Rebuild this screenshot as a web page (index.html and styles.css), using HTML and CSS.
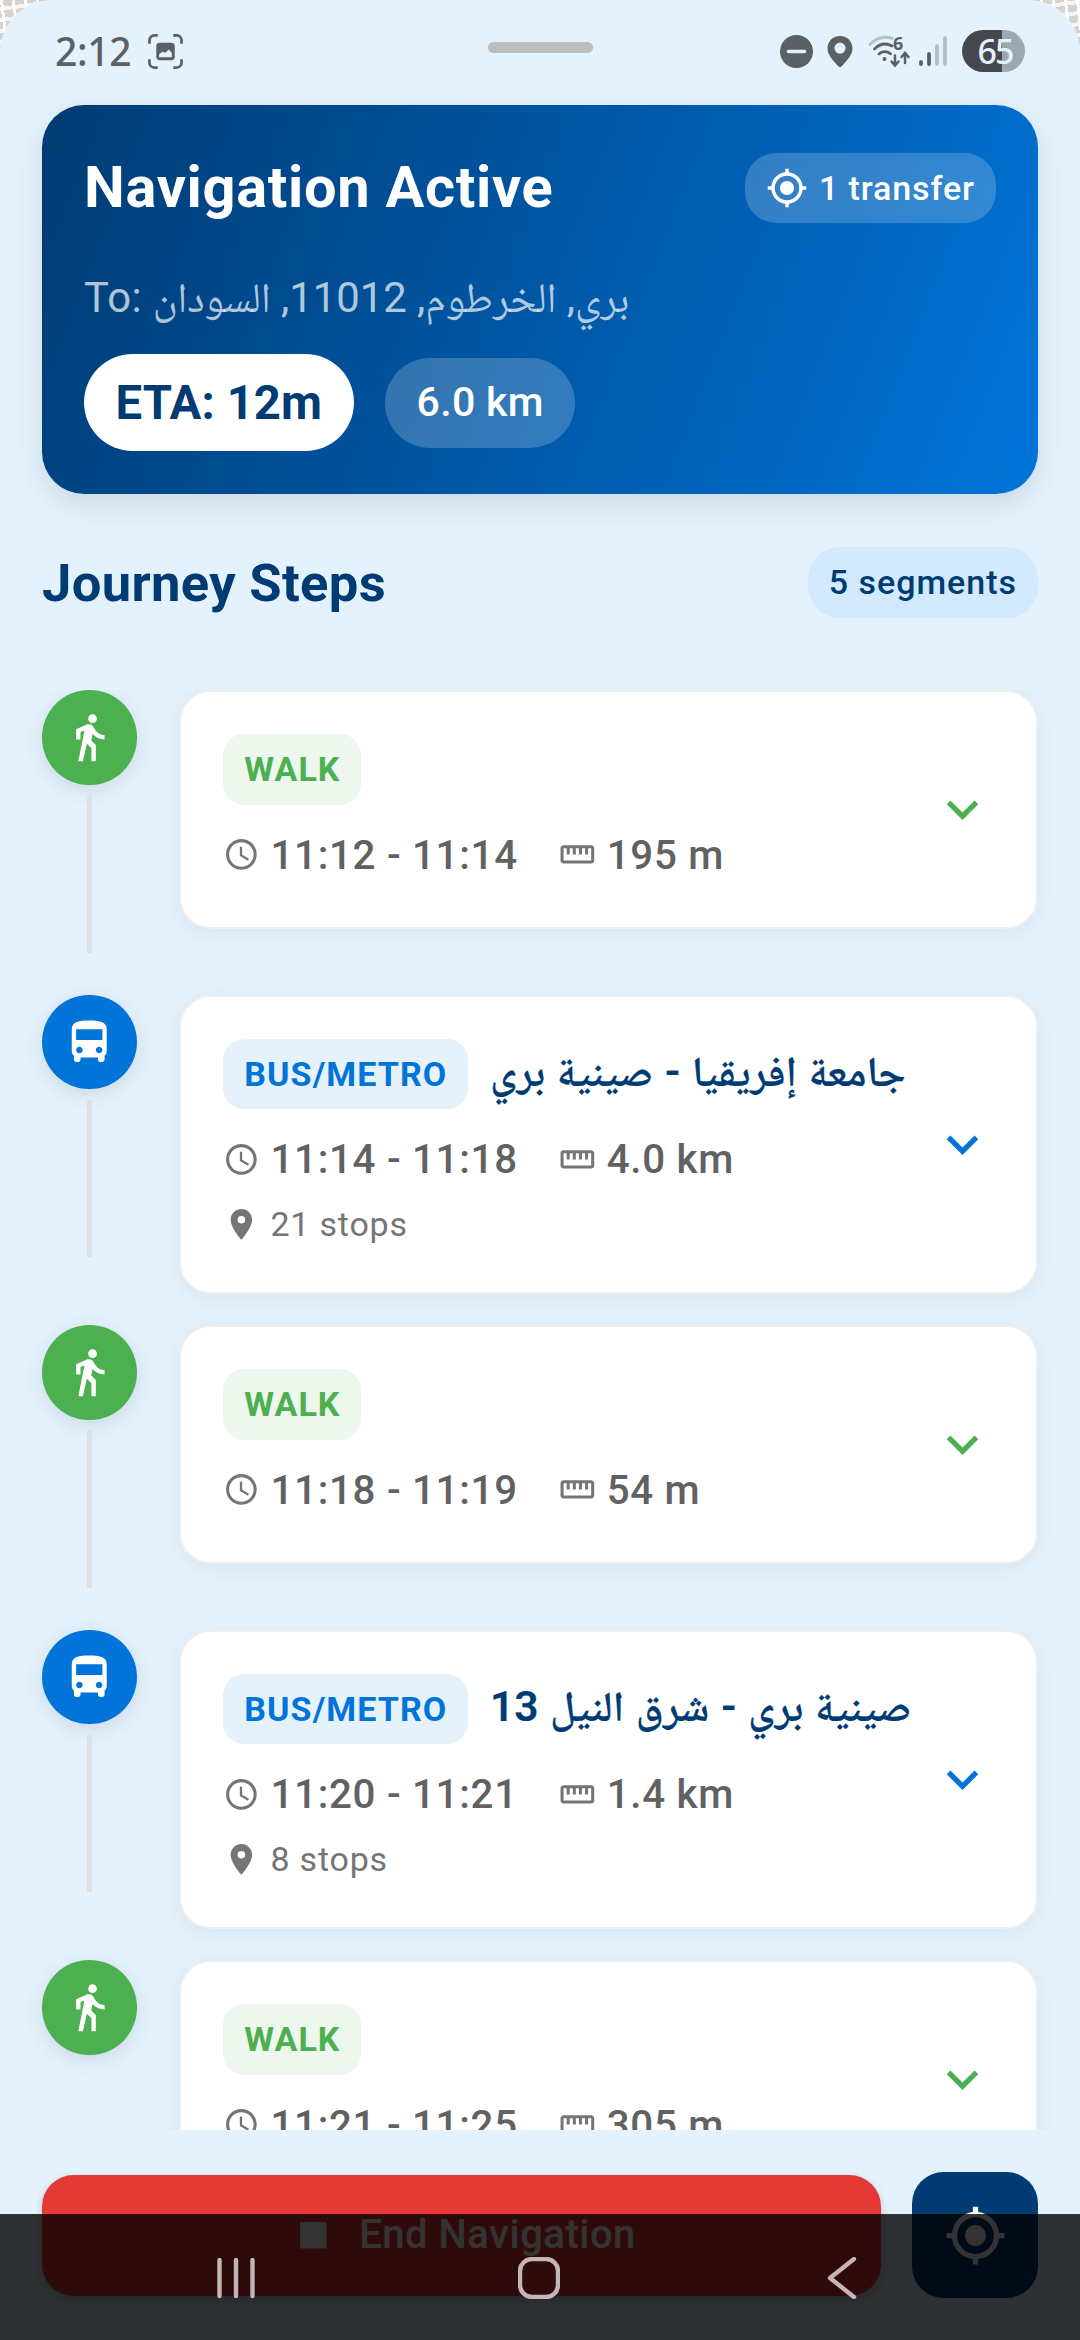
FILE: index.html
```html
<!DOCTYPE html>
<html lang="en">
<head>
<meta charset="utf-8">
<title>Navigation</title>
<link rel="stylesheet" href="styles.css">
</head>
<body>
<svg class="defs" aria-hidden="true">
  <symbol id="locate" viewBox="0 0 24 24"><path d="M12 8c-2.21 0-4 1.79-4 4s1.79 4 4 4 4-1.79 4-4-1.79-4-4-4zm8.94 3A8.994 8.994 0 0 0 13 3.06V1h-2v2.06A8.994 8.994 0 0 0 3.06 11H1v2h2.06A8.994 8.994 0 0 0 11 20.94V23h2v-2.06A8.994 8.994 0 0 0 20.94 13H23v-2h-2.06zM12 19c-3.87 0-7-3.13-7-7s3.13-7 7-7 7 3.13 7 7-3.13 7-7 7z"/></symbol>
  <symbol id="walk" viewBox="0 0 24 24"><path d="M13.5 5.5c1.1 0 2-.9 2-2s-.9-2-2-2-2 .9-2 2 .9 2 2 2zM9.8 8.9L7 23h2.1l1.8-8 2.1 2v6h2v-7.5l-2.1-2 .6-3C14.8 12 16.8 13 19 13v-2c-1.9 0-3.5-1-4.3-2.4l-1-1.6c-.4-.6-1-1-1.7-1-.3 0-.5.1-.8.1L6 8.3V13h2V9.6l1.8-.7"/></symbol>
  <symbol id="bus" viewBox="0 0 24 24"><path d="M4 16c0 .88.39 1.67 1 2.22V20c0 .55.45 1 1 1h1c.55 0 1-.45 1-1v-1h8v1c0 .55.45 1 1 1h1c.55 0 1-.45 1-1v-1.78c.61-.55 1-1.34 1-2.22V6c0-3.5-3.58-4-8-4s-8 .5-8 4v10zm3.5 1c-.83 0-1.5-.67-1.5-1.5S6.67 14 7.5 14s1.5.67 1.5 1.5S8.33 17 7.5 17zm9 0c-.83 0-1.5-.67-1.5-1.5s.67-1.5 1.5-1.5 1.5.67 1.5 1.5-.67 1.5-1.5 1.5zm1.5-6H6V6h12v5z"/></symbol>
  <symbol id="clock" viewBox="0 0 24 24"><path d="M11.99 2C6.47 2 2 6.48 2 12s4.47 10 9.99 10C17.52 22 22 17.52 22 12S17.52 2 11.99 2zM12 20c-4.42 0-8-3.58-8-8s3.58-8 8-8 8 3.58 8 8-3.58 8-8 8zm.5-13H11v6l5.25 3.15.75-1.23-4.5-2.67z"/></symbol>
  <symbol id="ruler" viewBox="0 0 24 24"><path d="M21 6H3c-1.1 0-2 .9-2 2v8c0 1.1.9 2 2 2h18c1.1 0 2-.9 2-2V8c0-1.1-.9-2-2-2zm0 10H3V8h2v4h2V8h2v4h2V8h2v4h2V8h2v4h2V8h2v8z"/></symbol>
  <symbol id="pin" viewBox="0 0 24 24"><path d="M12 2C8.13 2 5 5.13 5 9c0 5.25 7 13 7 13s7-7.75 7-13c0-3.87-3.13-7-7-7zm0 9.5a2.5 2.5 0 0 1 0-5 2.5 2.5 0 0 1 0 5z"/></symbol>
  <symbol id="more" viewBox="0 0 24 24"><path d="M16.59 8.59L12 13.17 7.41 8.59 6 10l6 6 6-6z"/></symbol>
</svg>
<div class="screen">
  <main class="sheet">
    <header class="status">
      <span class="time">2:12</span>
      <svg class="shot" viewBox="0 0 36 36"><path d="M1.5 10V6.5a5 5 0 0 1 5-5H10M26 1.5h3.5a5 5 0 0 1 5 5V10M34.5 26v3.5a5 5 0 0 1-5 5H26M10 34.5H6.5a5 5 0 0 1-5-5V26" fill="none" stroke="currentColor" stroke-width="2.8"/><path fill-rule="evenodd" fill="currentColor" d="M12 9h12a3.500 3.500 0 0 1 3.500 3.500v11A3.500 3.500 0 0 1 24 27H12a3.500 3.500 0 0 1-3.500-3.500v-11A3.500 3.500 0 0 1 12 9zM11.500 20.500v3.500h13v-4.500l-3-3.500-4 3.500-2-1.500z"/></svg>
      <span class="handle"></span>
      <span class="tray">
        <svg class="dnd" viewBox="0 0 33 33"><circle cx="16.5" cy="16.5" r="16.5" fill="currentColor"/><path d="M8.5 16.5h16" stroke="#e3f2fd" stroke-width="3.6" stroke-linecap="round"/></svg>
        <svg class="gps" viewBox="0 0 26 31"><path fill="currentColor" fill-rule="evenodd" d="M13 0C5.800 0 .5 5.500.5 12.300c0 7.200 6.500 13 10.500 17.700a2.500 2.500 0 0 0 4 0c4-4.700 10.500-10.500 10.500-17.700C25.500 5.500 20.200 0 13 0zm0 6.500a5.600 5.600 0 1 1 0 11.200 5.600 5.600 0 0 1 0-11.200z"/></svg>
        <svg class="wifi" viewBox="0 0 42 32"><g fill="none" stroke="currentColor" stroke-width="2.8" stroke-linecap="round"><path d="M2 9.500C9 2 17 1 24.500 3.500" opacity=".35"/><path d="M6.500 14c5.500-5.500 12-6 17.500-3"/><path d="M11 19c3-3 8-3.200 11.500-.2"/><path d="M27 20.500v9.500M23.500 26.500l3.500 4 3.500-4M37 28V18.500M33.500 22l3.500-4 3.500 4" stroke-width="2.5"/></g><circle cx="16.500" cy="24" r="2" fill="currentColor"/><text x="25" y="14.500" class="wifi-gen">6</text></svg>
        <svg class="signal" viewBox="0 0 28 30"><g stroke="currentColor" stroke-width="3.8" stroke-linecap="round"><path d="M2 26v2M10 18v10"/><path d="M18 10v18M26 2v26" opacity=".35"/></g></svg>
        <span class="battery">65</span>
      </span>
    </header>

    <section class="trip">
      <div class="trip-top">
        <h1>Navigation Active</h1>
        <span class="transfer"><svg class="i42"><use href="#locate"/></svg>1 transfer</span>
      </div>
      <p class="dest">To: <bdi dir="rtl">بري, الخرطوم, 11012, السودان</bdi></p>
      <div class="figures">
        <span class="eta">ETA: 12m</span>
        <span class="km">6.0 km</span>
      </div>
    </section>

    <div class="heading">
      <h2>Journey Steps</h2>
      <span class="count">5 segments</span>
    </div>

    <ol class="steps">
      <li class="step walk">
        <div class="rail"><span class="dot"><svg><use href="#walk"/></svg></span><i class="line"></i></div>
        <article class="card">
          <div class="info">
            <div class="row"><span class="badge">WALK</span></div>
            <div class="meta"><svg><use href="#clock"/></svg><span class="when">11:12 - 11:14</span><svg><use href="#ruler"/></svg><span>195 m</span></div>
          </div>
          <svg class="more"><use href="#more"/></svg>
        </article>
      </li>
      <li class="step bus">
        <div class="rail"><span class="dot"><svg><use href="#bus"/></svg></span><i class="line"></i></div>
        <article class="card">
          <div class="info">
            <div class="row"><span class="badge">BUS/METRO</span><span class="route" dir="rtl">جامعة إفريقيا - صينية بري</span></div>
            <div class="meta"><svg><use href="#clock"/></svg><span class="when">11:14 - 11:18</span><svg><use href="#ruler"/></svg><span>4.0 km</span></div>
            <div class="stops"><svg><use href="#pin"/></svg><span>21 stops</span></div>
          </div>
          <svg class="more"><use href="#more"/></svg>
        </article>
      </li>
      <li class="step walk">
        <div class="rail"><span class="dot"><svg><use href="#walk"/></svg></span><i class="line"></i></div>
        <article class="card">
          <div class="info">
            <div class="row"><span class="badge">WALK</span></div>
            <div class="meta"><svg><use href="#clock"/></svg><span class="when">11:18 - 11:19</span><svg><use href="#ruler"/></svg><span>54 m</span></div>
          </div>
          <svg class="more"><use href="#more"/></svg>
        </article>
      </li>
      <li class="step bus">
        <div class="rail"><span class="dot"><svg><use href="#bus"/></svg></span><i class="line"></i></div>
        <article class="card">
          <div class="info">
            <div class="row"><span class="badge">BUS/METRO</span><span class="route" dir="rtl">صينية بري - شرق النيل 13</span></div>
            <div class="meta"><svg><use href="#clock"/></svg><span class="when">11:20 - 11:21</span><svg><use href="#ruler"/></svg><span>1.4 km</span></div>
            <div class="stops"><svg><use href="#pin"/></svg><span>8 stops</span></div>
          </div>
          <svg class="more"><use href="#more"/></svg>
        </article>
      </li>
      <li class="step walk">
        <div class="rail"><span class="dot"><svg><use href="#walk"/></svg></span></div>
        <article class="card">
          <div class="info">
            <div class="row"><span class="badge">WALK</span></div>
            <div class="meta"><svg><use href="#clock"/></svg><span class="when">11:21 - 11:25</span><svg><use href="#ruler"/></svg><span>305 m</span></div>
          </div>
          <svg class="more"><use href="#more"/></svg>
        </article>
      </li>
    </ol>

    <footer class="actions">
      <button class="end"><svg viewBox="0 0 24 24"><path d="M6 6h12v12H6z"/></svg><span>End Navigation</span></button>
      <button class="recenter"><svg><use href="#locate"/></svg></button>
    </footer>
  </main>
  <nav class="system">
    <svg viewBox="0 0 40 42"><path d="M3.500 3v36M20 3v36M36.500 3v36"/></svg>
    <svg viewBox="0 0 42 42"><rect x="2" y="2" width="38" height="38" rx="12"/></svg>
    <svg viewBox="0 0 40 42"><path d="M33 2L9 21l24 19"/></svg>
  </nav>
</div>
</body>
</html>
```

FILE: styles.css
```css
* { box-sizing: border-box; }
body { margin: 0; font-family: Roboto, "Noto Naskh Arabic", "Noto Sans Arabic", "DejaVu Sans", sans-serif; }
h1, h2, p, ol { margin: 0; padding: 0; }
svg { display: block; flex: none; fill: currentColor; }
.defs { position: absolute; width: 0; height: 0; }

.screen {
  position: relative;
  width: 1080px;
  height: 2340px;
  overflow: hidden;
  background:
    repeating-linear-gradient(83deg, transparent 0 9px, #fff 9px 12px),
    repeating-linear-gradient(172deg, #d6d3cf 0 7px, #f6f5f3 7px 11px);
}
.sheet {
  display: flex;
  flex-direction: column;
  height: 2340px;
  border-radius: 52px 52px 0 0;
  background: #e3f2fd;
}

/* status bar */
.status {
  position: relative;
  flex: none;
  display: flex;
  align-items: center;
  height: 105px;
  padding: 0 55px 3px 55px;
  color: #5b6064;
}
.time { width: 93px; padding-bottom: 2px; font: 500 39px/1 "Noto Sans", sans-serif; letter-spacing: -.3px; }
.shot { width: 35px; height: 35px; }
.handle { position: absolute; left: 487.5px; top: 42px; width: 105px; height: 10.5px; border-radius: 6px; background: #bdbdbd; }
.tray { display: flex; align-items: center; margin-left: auto; }
.dnd { width: 33px; height: 33px; }
.gps { width: 26px; height: 31px; margin-left: 14px; }
.wifi { width: 42px; height: 32px; margin-left: 15px; overflow: visible; }
.wifi-gen { font: 700 18px "Noto Sans", sans-serif; fill: currentColor; }
.signal { width: 28px; height: 30px; margin-left: 9px; }
.battery {
  width: 63px;
  height: 42px;
  margin-left: 15px;
  padding-left: 3px;
  border-radius: 21px;
  background: linear-gradient(90deg, #45484d 40px, #9ca8b1 40px);
  color: #e3f2fd;
  font: 500 34px/42px "Noto Sans", sans-serif;
  letter-spacing: -2px;
  text-align: center;
}

/* trip summary */
.trip {
  flex: none;
  display: flex;
  flex-direction: column;
  height: 388.5px;
  margin: 0 42px;
  padding: 42px;
  border-radius: 42px;
  background: linear-gradient(111.3deg, #003b73, #0074d9);
  box-shadow: 0 10.5px 31.5px rgba(0, 0, 0, .1);
  color: #fff;
}
.trip-top { display: flex; align-items: center; justify-content: space-between; height: 81px; }
h1 { padding-bottom: 2px; font-size: 57.75px; font-weight: 700; line-height: 70px; letter-spacing: .7px; }
.transfer {
  display: flex;
  align-items: center;
  gap: 10.5px;
  height: 70px;
  padding: 0 21px;
  border-radius: 31.5px;
  background: rgba(255, 255, 255, .2);
  font-size: 34px;
  font-weight: 500;
  letter-spacing: .9px;
}
.i42 { width: 42px; height: 42px; }
.dest { height: 60px; margin-top: 40px; font-size: 41.8px; line-height: 60px; letter-spacing: .4px; color: rgba(255, 255, 255, .7); white-space: nowrap; }
.figures { display: flex; align-items: center; gap: 31.5px; margin-top: 26px; }
.eta { height: 97px; padding: 0 31.5px; border-radius: 49px; background: #fff; color: #003b73; font-size: 47.25px; font-weight: 700; line-height: 99px; letter-spacing: .1px; }
.km { height: 90px; padding: 0 31.5px; border-radius: 45px; background: rgba(255, 255, 255, .2); font-size: 41px; font-weight: 500; line-height: 89px; letter-spacing: .3px; }

/* section heading */
.heading { flex: none; display: flex; align-items: center; justify-content: space-between; margin: 53px 42px 0; height: 72px; color: #003b73; }
h2 { font-size: 52.5px; font-weight: 700; letter-spacing: .35px; }
.count { padding: 0 21px; border-radius: 31.5px; background: #d2e9fe; font-size: 34px; font-weight: 500; line-height: 71px; letter-spacing: 1px; }

/* steps */
.steps { flex: none; height: 1440px; margin-top: 71.5px; padding: 0 42px; overflow: hidden; list-style: none; }
.step { display: flex; gap: 42px; }
.rail { flex: none; display: flex; flex-direction: column; align-items: center; width: 94.5px; padding-bottom: 42px; }
.dot { display: flex; align-items: center; justify-content: center; width: 94.5px; height: 94.5px; border-radius: 50%; background: var(--tone); color: #fff; box-shadow: 0 5px 21px rgba(0, 0, 0, .1); }
.dot svg { width: 52.5px; height: 52.5px; }
.line { width: 5.25px; height: 157.5px; margin-top: 10.5px; background: #e0e0e0; }
.walk { --tone: #4caf50; --tint: #edf7ee; }
.bus { --tone: #0074d9; --tint: #e5f1fb; }
.card {
  flex: 1;
  align-self: flex-start;
  display: flex;
  align-items: center;
  min-width: 0;
  margin-bottom: 31.5px;
  padding: 42px;
  border: 2.6px solid #eee;
  border-radius: 31.5px;
  background: #fff;
  box-shadow: 0 5px 21px rgba(0, 0, 0, .06);
}
.info { flex: 1; min-width: 0; }
.row { display: flex; align-items: center; height: 70.5px; }
.badge { padding: 0 20.5px 0 21.8px; border-radius: 21px; background: var(--tint); color: var(--tone); font-size: 34px; font-weight: 700; line-height: 70.5px; letter-spacing: 1.1px; }
.route { margin-left: 22px; padding-bottom: 4px; color: #003b73; font-size: 42.5px; font-weight: 600; line-height: 60px; letter-spacing: .3px; word-spacing: 1px; white-space: nowrap; -webkit-text-stroke: .2px #003b73; }
.meta { display: flex; align-items: center; height: 60px; margin-top: 20px; color: #616161; font-size: 40.3px; font-weight: 500; letter-spacing: .7px; }
.meta span { padding: 1px 0 0 .7px; }
.meta svg, .stops svg { width: 36.75px; height: 36.75px; margin-right: 10.5px; color: #757575; }
.meta .when { width: 247px; margin-right: 42px; white-space: nowrap; }
.stops { display: flex; align-items: center; height: 50px; margin-top: 10.5px; color: #757575; font-size: 34px; letter-spacing: .8px; }
.stops span { padding: 0 0 2px .7px; }
.more { width: 63px; height: 63px; color: var(--tone); }

/* bottom actions */
.actions { display: flex; align-items: center; gap: 31.5px; padding: 42px 42px 0; }
button { display: flex; align-items: center; justify-content: center; padding: 0; border: 0; border-radius: 31.5px; color: #fff; font-family: inherit; }
.end { flex: 1; height: 121px; gap: 20px; background: #e53935; box-shadow: 0 4px 8px rgba(0, 0, 0, .2); font-size: 40px; font-weight: 500; letter-spacing: .5px; }
.end span { padding-bottom: 2px; }
.end svg { width: 52.5px; height: 52.5px; }
.recenter { width: 126px; height: 126px; background: #003b73; }
.recenter svg { width: 63px; height: 63px; }

/* translucent system navigation over the page */
.system { position: absolute; left: 0; right: 0; bottom: 0; display: flex; justify-content: space-between; height: 126px; padding: 43px 218px 0 215px; background: rgba(0, 0, 0, .8); }
.system svg { width: 42px; height: 42px; fill: none; stroke: #c3b6b7; stroke-width: 4.4; stroke-linecap: round; stroke-linejoin: round; }
```
